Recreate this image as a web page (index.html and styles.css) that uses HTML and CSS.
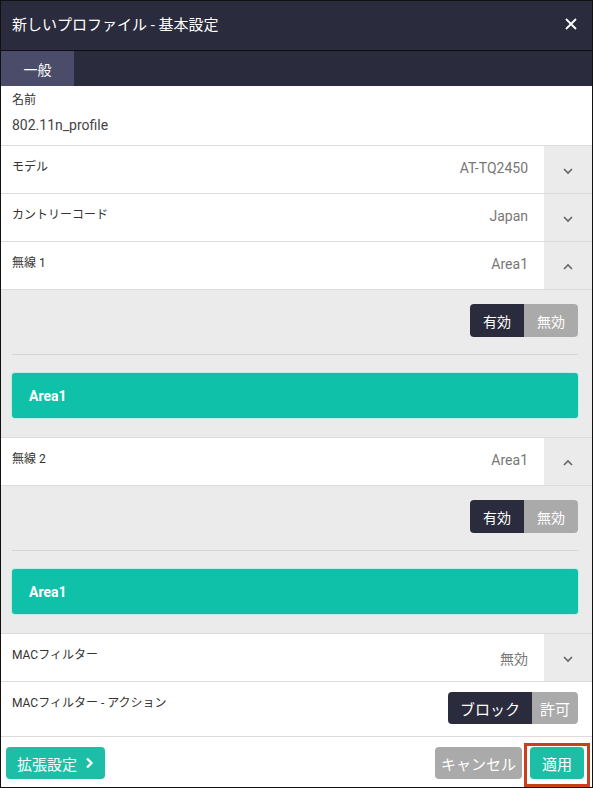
FILE: index.html
```html
<!DOCTYPE html>
<html lang="ja">
<head>
<meta charset="utf-8">
<link rel="stylesheet" href="styles.css">
</head>
<body>
<div class="dialog">
  <div class="header">
    <span class="title">新しいプロファイル - 基本設定</span>
    <svg class="close" width="12" height="12" viewBox="0 0 12 12"><path d="M1 1L11 11M11 1L1 11" stroke="#fff" stroke-width="1.8" fill="none"/></svg>
  </div>
  <div class="tabs"><div class="tab">一般</div></div>

  <div class="name-section">
    <div class="label">名前</div>
    <div class="name-value">802.11n_profile</div>
  </div>

  <div class="row">
    <div class="row-main"><span class="label">モデル</span><span class="value">AT-TQ2450</span></div>
    <div class="chev"><svg width="12" height="8" viewBox="0 0 12 8"><path d="M2 2L6 6L10 2" stroke="#666" stroke-width="1.6" fill="none"/></svg></div>
  </div>
  <div class="row">
    <div class="row-main"><span class="label">カントリーコード</span><span class="value">Japan</span></div>
    <div class="chev"><svg width="12" height="8" viewBox="0 0 12 8"><path d="M2 2L6 6L10 2" stroke="#666" stroke-width="1.6" fill="none"/></svg></div>
  </div>
  <div class="row">
    <div class="row-main"><span class="label">無線 1</span><span class="value">Area1</span></div>
    <div class="chev"><svg width="12" height="8" viewBox="0 0 12 8"><path d="M2 6L6 2L10 6" stroke="#666" stroke-width="1.6" fill="none"/></svg></div>
  </div>
  <div class="panel">
    <div class="toggle-area">
      <div class="toggle"><span class="on">有効</span><span class="off">無効</span></div>
    </div>
    <div class="area-wrap"><div class="area-bar">Area1</div></div>
  </div>

  <div class="row">
    <div class="row-main"><span class="label">無線 2</span><span class="value">Area1</span></div>
    <div class="chev"><svg width="12" height="8" viewBox="0 0 12 8"><path d="M2 6L6 2L10 6" stroke="#666" stroke-width="1.6" fill="none"/></svg></div>
  </div>
  <div class="panel">
    <div class="toggle-area">
      <div class="toggle"><span class="on">有効</span><span class="off">無効</span></div>
    </div>
    <div class="area-wrap"><div class="area-bar">Area1</div></div>
  </div>

  <div class="row">
    <div class="row-main"><span class="label">MACフィルター</span><span class="value">無効</span></div>
    <div class="chev"><svg width="12" height="8" viewBox="0 0 12 8"><path d="M2 2L6 6L10 2" stroke="#666" stroke-width="1.6" fill="none"/></svg></div>
  </div>
  <div class="row action-row">
    <div class="row-main"><span class="label">MACフィルター - アクション</span></div>
    <div class="toggle toggle-action"><span class="on">ブロック</span><span class="off">許可</span></div>
  </div>

  <div class="footer">
    <button class="btn btn-teal">拡張設定 <svg width="9" height="12" viewBox="0 0 9 12"><path d="M2 1.5L6.5 6L2 10.5" stroke="#fff" stroke-width="2.4" fill="none"/></svg></button>
    <div class="footer-right">
      <button class="btn btn-grey">キャンセル</button>
      <span class="highlight"><button class="btn btn-teal btn-apply">適用</button></span>
    </div>
  </div>
</div>
</body>
</html>
```
FILE: styles.css
```css
* { box-sizing: border-box; }
html, body { margin: 0; padding: 0; background: #fff; }
body {
  font-family: Roboto, "Noto Sans CJK JP", sans-serif;
  color: #333;
}
.dialog {
  width: 593px;
  height: 788px;
  border: 1px solid #111;
  display: flex;
  flex-direction: column;
  overflow: hidden;
  background: #fff;
}
.header {
  height: 50px;
  flex: none;
  background: #2a2b3c;
  border-bottom: 1px solid #0e0e14;
  display: flex;
  align-items: center;
  justify-content: space-between;
  padding: 0 15px 4px 11px;
}
.title { color: #fff; font-size: 15px; }
.tabs {
  height: 35px;
  flex: none;
  background: #2a2b3c;
  display: flex;
}
.tab {
  width: 73px;
  background: #4a4c69;
  color: #fff;
  font-size: 14px;
  display: flex;
  align-items: center;
  justify-content: center;
}
.name-section {
  height: 60px;
  flex: none;
  padding: 5px 11px 0;
  border-bottom: 1px solid #dcdcdc;
}
.label { font-size: 12px; color: #333; line-height: 18px; }
.name-value { font-size: 14px; color: #444; margin-top: 6px; line-height: 20px; }
.row {
  height: 48px;
  flex: none;
  display: flex;
  border-bottom: 1px solid #dcdcdc;
}
.row-main {
  flex: 1;
  display: flex;
  justify-content: space-between;
  padding: 12px 16px 0 11px;
}
.row-main .value {
  font-size: 14px;
  color: #777;
  align-self: flex-start;
  margin-top: 2px;
}
.chev {
  width: 48px;
  background: #ebebeb;
  display: flex;
  align-items: center;
  justify-content: center;
  padding-top: 2px;
}
.panel {
  flex: none;
  background: #ebebeb;
  border-bottom: 1px solid #dcdcdc;
}
.toggle-area {
  height: 65px;
  padding: 14px 14px 0 11px;
  display: flex;
  justify-content: flex-end;
  align-items: flex-start;
  position: relative;
}
.toggle-area::after {
  content: "";
  position: absolute;
  left: 11px;
  right: 14px;
  bottom: 0;
  border-bottom: 1px solid #d4d4d4;
}
.toggle {
  display: flex;
  height: 33px;
  border-radius: 4px;
  overflow: hidden;
  font-size: 14px;
}
.toggle span {
  display: flex;
  align-items: center;
  justify-content: center;
  color: #fff;
}
.toggle .on { background: #2a2b3c; width: 54px; }
.toggle .off { background: #aaaaaa; width: 54px; }
.area-wrap {
  height: 82px;
  padding: 18px 14px 0 11px;
}
.area-bar {
  height: 45px;
  background: #10c1a9;
  border-radius: 3px;
  color: #fff;
  font-weight: bold;
  font-size: 14px;
  display: flex;
  align-items: center;
  padding-left: 17px;
  box-shadow: 0 0 0 1px #bdeee6;
}
.action-row {
  height: 55px;
  align-items: flex-start;
}
.toggle-action {
  margin: 10px 14px 0 0;
  height: 32px;
  font-size: 15px;
}
.toggle-action .on { width: 84px; }
.toggle-action .off { width: 46px; }
.footer {
  flex: 1;
  display: flex;
  justify-content: space-between;
  align-items: flex-start;
  padding: 10px 2px 0 5px;
}
.btn {
  height: 32px;
  border: none;
  border-radius: 4px;
  color: #fff;
  font-family: Roboto, "Noto Sans CJK JP", sans-serif;
  font-size: 15px;
  display: flex;
  align-items: center;
  justify-content: center;
  gap: 8px;
  padding: 0;
}
.btn-teal { background: #1cbea5; width: 99px; }
.btn-grey { background: #aaaaaa; width: 87px; }
.footer-right {
  display: flex;
  align-items: flex-start;
  gap: 2px;
}
.highlight {
  display: block;
  margin-top: -4px;
  border: 3px solid #c8401c;
  padding: 1px 3px 5px 3px;
}
.btn-apply { width: 54px; }
```
